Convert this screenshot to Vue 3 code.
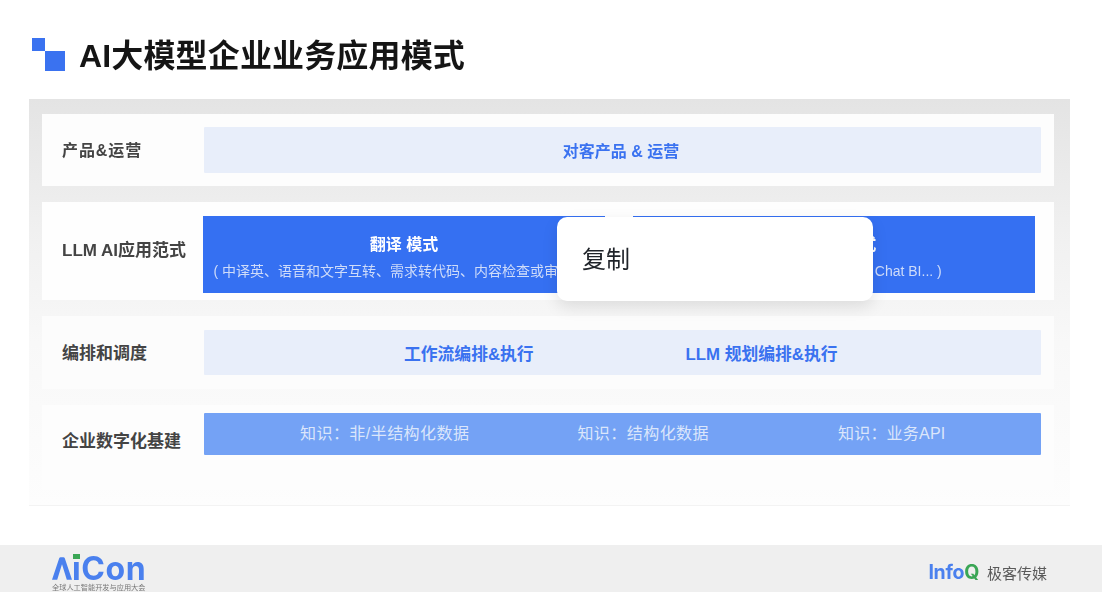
<script setup>
const rows = [
  { id: 'product', label: '产品&运营', tall: 72, kind: 'soft', items: ['对客产品 & 运营'] },
  { id: 'flow', label: '编排和调度', tall: 73, kind: 'flow', items: ['工作流编排&执行', 'LLM 规划编排&执行'] },
]
</script>

<template>
  <div class="page">
    <div class="slide">
      <header class="head">
        <svg class="mark" width="33" height="33" viewBox="0 0 33 33" aria-hidden="true">
          <rect x="0" y="0" width="13" height="13" fill="#3a72f0" />
          <rect x="13" y="13" width="20" height="20" fill="#3a72f0" />
        </svg>
        <h1 class="title">AI大模型企业业务应用模式</h1>
      </header>

      <section class="panel">
        <div class="row row-a">
          <div class="label">{{ rows[0].label }}</div>
          <div class="bar soft single"><b>{{ rows[0].items[0] }}</b></div>
        </div>

        <div class="row row-b">
          <div class="label">LLM AI应用范式</div>
          <div class="modes">
            <div class="mode">
              <b>翻译 模式</b>
              <span>( 中译英、语音和文字互转、需求转代码、内容检查或审核等 )</span>
            </div>
            <div class="mode">
              <b>知识库 模式</b>
              <span>( 智能客服、知识问答、Chat BI... )</span>
            </div>
          </div>
        </div>

        <div class="row row-c">
          <div class="label">{{ rows[1].label }}</div>
          <div class="bar soft flow">
            <b>{{ rows[1].items[0] }}</b>
            <b>{{ rows[1].items[1] }}</b>
          </div>
        </div>

        <div class="row row-d">
          <div class="label">企业数字化基建</div>
          <div class="bar base">
            <span>知识：非/半结构化数据</span>
            <span>知识：结构化数据</span>
            <span>知识：业务API</span>
          </div>
        </div>
      </section>

      <footer class="foot">
        <div class="aicon">
          <div class="aicon-word">
            <svg class="lambda" width="20" height="23" viewBox="0 0 20 23" aria-hidden="true">
              <path d="M0 22.8 L7.2 1.2 Q7.6 0.2 8.6 0.2 H11.4 Q12.4 0.2 12.8 1.2 L20 22.8 H14.8 L10 7.2 L5.2 22.8 Z" fill="#4a80ee" />
            </svg>
            <span class="dotless">ı</span><span>Con</span>
          </div>
          <div class="aicon-sub">全球人工智能开发与应用大会</div>
        </div>
        <div class="infoq">
          <span class="iq"><i>Info</i><em>Q</em></span>
          <span class="geek">极客传媒</span>
        </div>
      </footer>
    </div>

    <div class="popup">复制</div>
  </div>
</template>

<style scoped>
.page {
  position: relative;
  width: 1102px;
  height: 592px;
  overflow: hidden;
  background: #fff;
  font-family: "Liberation Sans", "Noto Sans CJK SC", sans-serif;
}
.slide {
  height: 592px;
  display: flex;
  flex-direction: column;
  filter: blur(0.45px);
}
.head {
  height: 99px;
  display: flex;
  align-items: flex-start;
  padding: 38px 0 0 32px;
  box-sizing: border-box;
  gap: 14px;
}
.mark { flex: none; }
.title {
  margin: 0;
  font-size: 32px;
  line-height: 36px;
  font-weight: 700;
  letter-spacing: 0.15px;
  color: #151515;
  white-space: nowrap;
}
.panel {
  margin: 0 32px 0 29px;
  height: 407px;
  box-sizing: border-box;
  padding: 15px 16px 0 13px;
  display: flex;
  flex-direction: column;
  gap: 16px;
  background: linear-gradient(180deg, #e4e4e4 0%, #f1f1f1 35%, #f8f8f8 60%, #fdfdfd 100%);
  border-bottom: 1px solid #f3f3f3;
}
.row {
  display: flex;
  background: #fff;
  padding: 13px 13px 0 20px;
  box-sizing: border-box;
}
.row-a { height: 72px; background: #fdfdfd; }
.row-b { height: 98px; padding: 14px 19px 0 20px; background: #fefefe; }
.row-c { height: 73px; padding-top: 14px; background: #fcfcfc; }
.row-d { height: 85px; padding-top: 8px; background: #fdfdfd; }
.label {
  width: 142px;
  flex: none;
  font-size: 17px;
  font-weight: 700;
  color: #444;
  white-space: nowrap;
  line-height: 48px;
}
.row-a .label { font-size: 16px; letter-spacing: 0.9px; }
.row-b .label { width: 141px; line-height: 70px; }
.row-c .label { line-height: 48px; }
.row-d .label { line-height: 57px; }
.bar {
  flex: 1;
  min-width: 0;
  border-radius: 1px;
}
.soft { background: #e8eefa; color: #3a72f0; font-size: 16px; height: 46px; }
.soft b { font-weight: 700; }
.single { display: flex; align-items: center; justify-content: center; padding-right: 3px; box-sizing: border-box; }
.flow { display: flex; align-items: center; height: 45px; padding-left: 200px; gap: 152px; font-size: 16.8px; }
.modes { flex: 1; display: flex; gap: 28px; height: 77px; }
.mode {
  width: 402px;
  background: #3570f2;
  color: #fff;
  display: flex;
  flex-direction: column;
  align-items: center;
  padding-top: 19px;
  box-sizing: border-box;
  overflow: hidden;
}
.mode b { font-size: 16px; line-height: 20px; font-weight: 700; }
.mode span {
  margin-top: 8px;
  font-size: 14px;
  line-height: 16px;
  color: #cfdcf9;
  white-space: nowrap;
}
.base {
  height: 42px;
  background: #74a2f5;
  color: #dbe6fb;
  font-size: 16px;
  display: flex;
  align-items: flex-start;
  line-height: 41px;
  padding-left: 96px;
  letter-spacing: 0.45px;
}
.base span { white-space: nowrap; }
.base span:nth-child(2) { margin-left: 108px; }
.base span:nth-child(3) { margin-left: 129px; letter-spacing: 0.2px; }
.foot {
  margin-top: 39px;
  height: 47px;
  flex: none;
  background: #efefef;
  display: flex;
  justify-content: space-between;
  padding: 12px 55px 0 52px;
  box-sizing: border-box;
}
.aicon { width: 100px; }
.aicon-word {
  display: flex;
  align-items: flex-end;
  height: 24px;
  font-family: "Inter", "Liberation Sans", sans-serif;
  font-weight: 700;
  font-size: 32px;
  line-height: 24px;
  letter-spacing: 0.6px;
  color: #4a80ee;
}
.lambda { flex: none; margin-bottom: 1px; }
.dotless { position: relative; margin-left: 0; }
.dotless::before {
  content: "";
  position: absolute;
  left: 1px;
  top: -3px;
  width: 7px;
  height: 5px;
  background: #3aa655;
}
.aicon-sub {
  margin-top: 2px;
  font-size: 7.2px;
  line-height: 9px;
  color: #777;
  white-space: nowrap;
}
.infoq { display: flex; align-items: center; height: 30px; gap: 8px; }
.iq { font-family: "Inter", "Liberation Sans", sans-serif; font-size: 19.5px; font-weight: 700; letter-spacing: -0.3px; }
.iq i { font-style: normal; color: #4a80ee; }
.iq em { font-style: normal; color: #3aa655; }
.geek { font-size: 15px; color: #5a5a5a; }
.popup {
  position: absolute;
  left: 557px;
  top: 217px;
  width: 316px;
  height: 84px;
  box-sizing: border-box;
  padding: 0 25px;
  background: #fff;
  border-radius: 10px;
  box-shadow: 0 6px 16px rgba(0, 0, 0, 0.1);
  font-size: 24px;
  line-height: 86px;
  color: #1f2329;
}
</style>
